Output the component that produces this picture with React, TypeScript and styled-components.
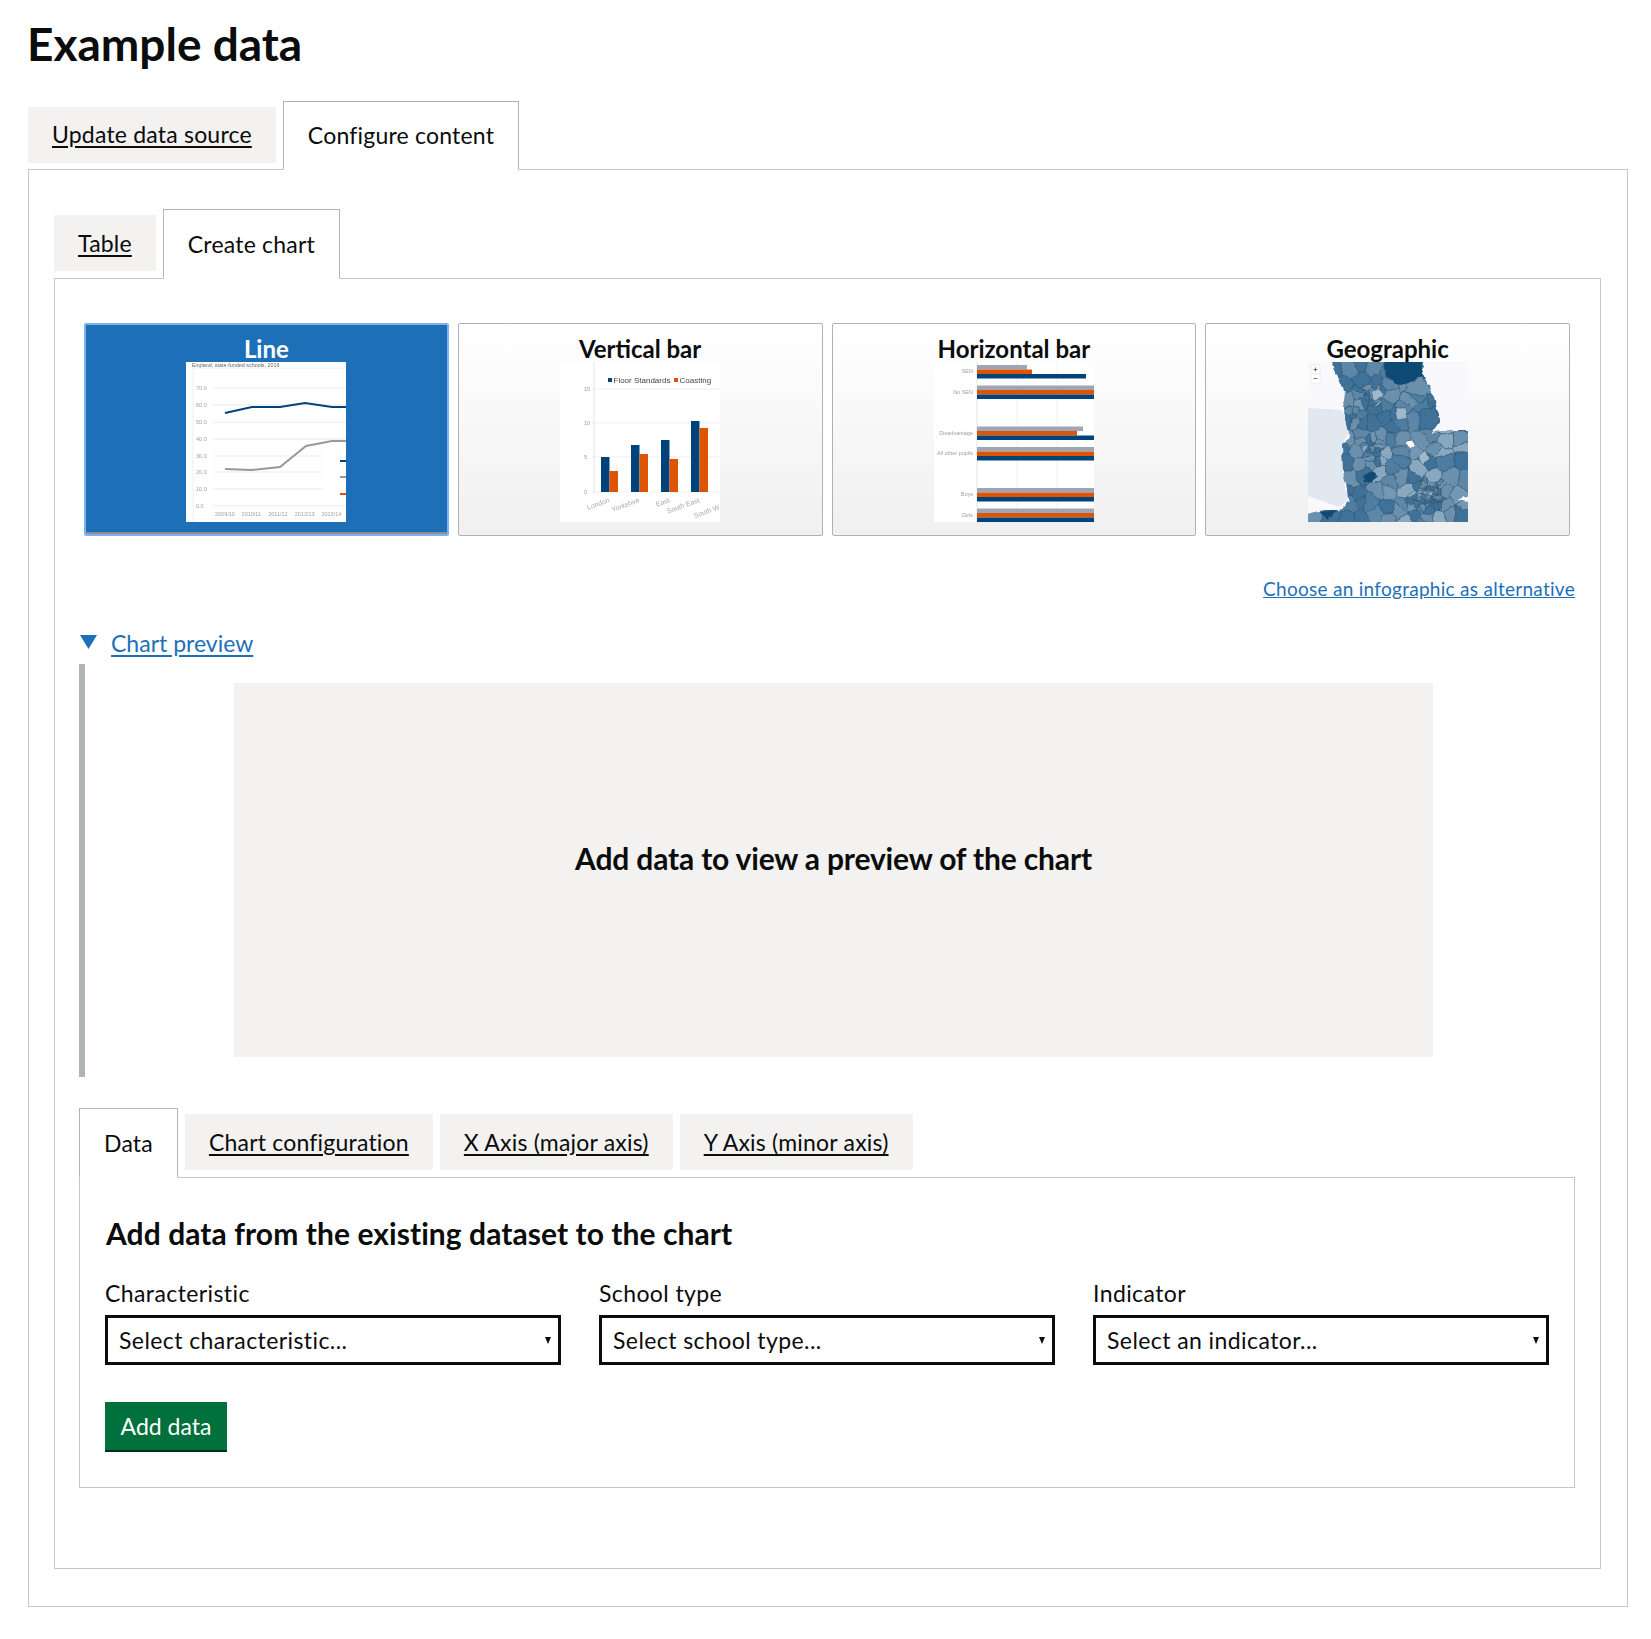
import React from 'react';
import styled, { createGlobalStyle } from 'styled-components';

const FONT = `Lato, "Noto Sans", Arial, sans-serif`;

const GlobalStyle = createGlobalStyle`
    body {
        margin: 0;
        background: #fff;
        color: #0b0c0c;
        font-family: ${FONT};
    }
`;

const Page = styled.div`
    width: 1600px;
    padding: 0 23px 33px 28px;
`;

const Title = styled.h1`
    margin: 0 0 0 -1px;
    padding: 14px 0 15px;
    font-size: 46px;
    line-height: 60px;
    font-weight: 700;
    height: 72px;
`;

const TabList = styled.div`
    display: flex;
    align-items: flex-end;
    gap: 7px;
    position: relative;
    z-index: 1;
    margin-bottom: -1px;
`;

const Tab = styled.a<{ $selected?: boolean }>`
    display: flex;
    align-items: center;
    padding: 0 24px 2px;
    font-size: 23px;
    letter-spacing: 0.2px;
    color: #0b0c0c;
    cursor: pointer;
    text-decoration: ${(p) => (p.$selected ? 'none' : 'underline')};
    text-underline-offset: 3px;
    height: ${(p) => (p.$selected ? '69px' : '56px')};
    margin-bottom: ${(p) => (p.$selected ? '0' : '7px')};
    background: ${(p) => (p.$selected ? '#fff' : '#f3f2f1')};
    border: ${(p) => (p.$selected ? '1px solid #b1b4b6' : 'none')};
    border-bottom: ${(p) => (p.$selected ? '1px solid #fff' : 'none')};
    box-sizing: border-box;
`;

const SubTab = styled(Tab)`
    padding-bottom: 0;
    height: ${(p) => (p.$selected ? '70px' : '56px')};
    margin-bottom: ${(p) => (p.$selected ? '0' : '8px')};
`;

const Panel = styled.div`
    border: 1px solid #c4c6c8;
`;

const OuterPanel = styled(Panel)`
    padding: 39px 26px 37px 25px;
`;

const InnerPanel = styled(Panel)`
    padding: 44px 25px 80px 24px;
`;

const CardRow = styled.div`
    display: grid;
    grid-template-columns: repeat(4, 1fr);
    gap: 9px;
    padding: 0 5px 0 5px;
`;

const Card = styled.div<{ $selected?: boolean }>`
    height: 213px;
    box-sizing: border-box;
    padding-top: ${(p) => (p.$selected ? '10px' : '11px')};
    text-align: center;
    border: ${(p) => (p.$selected ? '2px solid #7fb0f0' : '1px solid #b1b1b1')};
    border-radius: 2px;
    background: ${(p) => (p.$selected ? '#1d70b8' : 'linear-gradient(#fff, #f0f0f0)')};
    color: ${(p) => (p.$selected ? '#fff' : '#0b0c0c')};
    box-shadow: ${(p) => (p.$selected ? 'inset 0 -2px 0 #8f8f8f' : 'none')};
`;

const CardTitle = styled.div`
    font-size: 24px;
    line-height: 27px;
    font-weight: 700;
`;

const Thumb = styled.svg`
    display: block;
    margin: 0 auto;
    width: 160px;
    height: 160px;
    background: #fff;
    filter: blur(0.45px);
`;

const AltLink = styled.a`
    display: block;
    margin-top: 41px;
    text-align: right;
    font-size: 19px;
    letter-spacing: 0.28px;
    line-height: 24px;
    color: #1d70b8;
    text-decoration: underline;
`;

const Summary = styled.div`
    display: flex;
    align-items: center;
    gap: 14px;
    margin-top: 25px;
    height: 38px;
`;

const SummaryText = styled.a`
    margin-bottom: 4px;
    font-size: 23px;
    color: #1d70b8;
    text-decoration: underline;
    text-underline-offset: 3px;
`;

const Caret = styled.svg`
    display: block;
    width: 17px;
    height: 14px;
    margin: -6px 0 0 1px;
`;

const PreviewBody = styled.div`
    border-left: 6px solid #b1b4b6;
    padding: 19px 0 20px;
    margin-bottom: 31px;
`;

const PreviewBox = styled.div`
    width: 1199px;
    height: 374px;
    box-sizing: border-box;
    padding-bottom: 25px;
    margin-left: 149px;
    display: flex;
    align-items: center;
    justify-content: center;
    background: #f3f2f1;
    font-size: 30px;
    letter-spacing: -0.16px;
    font-weight: 700;
`;

const DataPanel = styled(Panel)`
    padding: 35px 25px 35px;
`;

const SectionHeading = styled.h2`
    margin: 0 0 0 1px;
    font-size: 30px;
    letter-spacing: 0.07px;
    line-height: 40px;
    font-weight: 700;
`;

const FieldGrid = styled.div`
    display: grid;
    grid-template-columns: repeat(3, 1fr);
    gap: 38px;
    margin-top: 24px;
`;

const Field = styled.label`
    display: block;
    font-size: 23px;
    letter-spacing: 0.4px;
    line-height: 32px;
`;

const SelectWrap = styled.div`
    position: relative;
    margin-top: 6px;

    &::after {
        content: '';
        position: absolute;
        right: 10px;
        top: 22px;
        border-top: 7px solid #0b0c0c;
        border-left: 3px solid transparent;
        border-right: 3px solid transparent;
        pointer-events: none;
    }
`;

const Select = styled.select`
    display: block;
    width: 100%;
    height: 50px;
    padding: 0 11px;
    box-sizing: border-box;
    appearance: none;
    border: 3px solid #0b0c0c;
    border-radius: 0;
    background: #fff;
    color: #0b0c0c;
    font-family: ${FONT};
    font-size: 23px;
    letter-spacing: 0.42px;
`;

const AddButton = styled.button`
    display: block;
    width: 122px;
    height: 50px;
    margin-top: 37px;
    padding: 0;
    border: none;
    border-bottom: 2px solid #002d18;
    background: #00703c;
    color: #fff;
    font-family: ${FONT};
    font-size: 23px;
`;

const BLUE = '#00437a';
const ORANGE = '#de5405';
const GREY = '#a0a5b5';
const AXIS = { fontSize: 5.5, fill: '#a0a0a0', fontFamily: '"Liberation Sans", sans-serif' };

const LineThumb = () => (
    <Thumb viewBox="0 0 160 160">
        <text x="6" y="4.5" fontSize="5.4" fill="#666" fontFamily='"Liberation Sans", sans-serif'>England, state-funded schools, 2016</text>
        <path d="M7 160V6H160" fill="none" stroke="#eee" />
        {[26, 43, 60, 77, 94, 110, 127, 144].map((y, i) => (
            <React.Fragment key={y}>
                <line x1="27" x2={y > 90 && y < 140 ? 137 : 160} y1={y} y2={y} stroke="#e6e6e6" strokeWidth="0.8" />
                <text x="10" y={y + 2} {...AXIS}>{(70 - i * 10).toFixed(1)}</text>
            </React.Fragment>
        ))}
        {['2009/10', '2010/11', '2011/12', '2012/13', '2013/14'].map((t, i) => (
            <text key={t} x={29 + i * 26.6} y="154" {...AXIS}>{t}</text>
        ))}
        <polyline points="39,51 66,45 94,45 119,41 146,45 160,45" fill="none" stroke={BLUE} strokeWidth="2" />
        <polyline points="39,107 66,108 94,105 120,84 146,79 160,79" fill="none" stroke="#999" strokeWidth="2" />
        <line x1="154" x2="160" y1="99" y2="99" stroke={BLUE} strokeWidth="2" />
        <line x1="154" x2="160" y1="115" y2="115" stroke="#999" strokeWidth="2" />
        <line x1="154" x2="160" y1="132" y2="132" stroke={ORANGE} strokeWidth="2" />
    </Thumb>
);

const VERTICAL_BARS = [
    { x: 41, blue: 95, orange: 109, label: 'London' },
    { x: 71, blue: 83, orange: 92, label: 'Yorkshire' },
    { x: 101, blue: 78, orange: 97, label: 'East' },
    { x: 131, blue: 59, orange: 66, label: 'South East' },
];

const VerticalThumb = () => (
    <Thumb viewBox="0 0 160 160">
        {[[27, 15], [61, 10], [95, 5], [130, 0]].map(([y, v]) => (
            <React.Fragment key={y}>
                <line x1="32" x2="160" y1={y} y2={y} stroke="#e6e6e6" strokeWidth="0.7" />
                <text x="24" y={y + 1.5} {...AXIS}>{v}</text>
            </React.Fragment>
        ))}
        <line x1="34" x2="34" y1="0" y2="130" stroke="#ddd" strokeWidth="0.8" />
        <rect x="48" y="16" width="4" height="4" fill={BLUE} />
        <text x="53.5" y="21" fontSize="8" fill="#444" fontFamily='"Liberation Sans", sans-serif'>Floor Standards</text>
        <rect x="114" y="16" width="4" height="4" fill={ORANGE} />
        <text x="119.5" y="21" fontSize="8" fill="#444" fontFamily='"Liberation Sans", sans-serif'>Coasting</text>
        {VERTICAL_BARS.map((b) => (
            <React.Fragment key={b.label}>
                <rect x={b.x} y={b.blue} width="8.5" height={130 - b.blue} fill={BLUE} />
                <rect x={b.x + 8.5} y={b.orange} width="8.5" height={130 - b.orange} fill={ORANGE} />
                <text
                    x={b.x + 9}
                    y="140"
                    textAnchor="end"
                    transform={`rotate(-20 ${b.x + 9} 140)`}
                    {...AXIS}
                    fontSize="7"
                    fill="#aaa"
                >
                    {b.label}
                </text>
            </React.Fragment>
        ))}
        <text x="160" y="147" textAnchor="end" transform="rotate(-20 160 147)" {...AXIS} fontSize="7" fill="#aaa">South W</text>
    </Thumb>
);

const HORIZONTAL_GROUPS = [
    { y: 3, label: 'SEN', grey: 93, orange: 98, blue: 152 },
    { y: 23.5, label: 'No SEN', grey: 160, orange: 160, blue: 160 },
    { y: 64.5, label: 'Disadvantage', grey: 149, orange: 143, blue: 160 },
    { y: 85, label: 'All other pupils', grey: 160, orange: 160, blue: 160 },
    { y: 126, label: 'Boys', grey: 160, orange: 160, blue: 160 },
    { y: 146.5, label: 'Girls', grey: 160, orange: 160, blue: 160 },
];

const HorizontalThumb = () => (
    <Thumb viewBox="0 0 160 160">
        <line x1="83" x2="83" y1="0" y2="160" stroke="#eee" strokeWidth="0.8" />
        <line x1="123" x2="123" y1="0" y2="160" stroke="#eee" strokeWidth="0.8" />
        <line x1="43" x2="43" y1="0" y2="160" stroke="#ddd" strokeWidth="0.8" />
        {HORIZONTAL_GROUPS.map((g) => (
            <React.Fragment key={g.label}>
                <text x="39" y={g.y + 8} textAnchor="end" {...AXIS}>{g.label}</text>
                <rect x="43" y={g.y} width={g.grey - 43} height="4.5" fill={GREY} />
                <rect x="43" y={g.y + 4.5} width={g.orange - 43} height="4.5" fill={ORANGE} />
                <rect x="43" y={g.y + 9} width={g.blue - 43} height="4.5" fill={BLUE} />
            </React.Fragment>
        ))}
    </Thumb>
);

// seeded so the map comes out the same on every load
const seeded = (start: number) => {
    let s = start;
    return () => {
        s = (s * 16807) % 2147483647;
        return (s - 1) / 2147483646;
    };
};

type Pt = [number, number];

const clipCell = (poly: Pt[], a: Pt, b: Pt): Pt[] => {
    const mx = (a[0] + b[0]) / 2;
    const my = (a[1] + b[1]) / 2;
    const nx = b[0] - a[0];
    const ny = b[1] - a[1];
    const side = (p: Pt) => (p[0] - mx) * nx + (p[1] - my) * ny;
    const out: Pt[] = [];
    poly.forEach((p, i) => {
        const q = poly[(i + 1) % poly.length];
        const sp = side(p);
        const sq = side(q);
        if (sp <= 0) out.push(p);
        if (sp * sq < 0) {
            const t = sp / (sp - sq);
            out.push([p[0] + (q[0] - p[0]) * t, p[1] + (q[1] - p[1]) * t]);
        }
    });
    return out;
};

const buildMapCells = () => {
    const rnd = seeded(4711);
    const seeds: Pt[] = [];
    for (let y = 0; y < 12; y++) {
        for (let x = 0; x < 11; x++) {
            seeds.push([x * 14.5 + 3 + rnd() * 12, y * 13.5 + 2 + rnd() * 11]);
        }
    }
    // denser districts: London, Manchester area, Birmingham
    const clusters: [number, number, number, number][] = [
        [120, 135, 12, 44],
        [64, 88, 9, 16],
        [62, 42, 16, 18],
        [110, 150, 20, 14],
    ];
    clusters.forEach(([cx, cy, r, n]) => {
        for (let i = 0; i < n; i++) {
            seeds.push([cx + (rnd() - 0.5) * r * 2, cy + (rnd() - 0.5) * r * 2]);
        }
    });
    const shades = ['#3f7299', '#3f7299', '#3f7299', '#4d7ea2', '#5b87a8', '#6a90ae', '#6a90ae', '#7398b5', '#88a8c0'];
    const box: Pt[] = [[-6, -6], [166, -6], [166, 166], [-6, 166]];
    return seeds.map((s) => {
        const cell = seeds.reduce<Pt[]>((poly, o) => (o === s ? poly : clipCell(poly, s, o)), box);
        return {
            points: cell.map((p) => `${p[0].toFixed(1)},${p[1].toFixed(1)}`).join(' '),
            fill: shades[Math.floor(rnd() * shades.length)],
        };
    });
};

const MAP_CELLS = buildMapCells();

const LAND = '20,-6 115,-6 114,11 125,31 132,58 125,71 137,68 166,68 166,131 149,138 166,141 166,166 -6,166 -6,153 15,148 32,148 42,138 35,111 34,81 42,75 35,45 37,31 27,8';
const WALES = '0,46 34,48 44,68 36,78 37,128 44,135 31,145 0,134';

const MapThumb = () => (
    <Thumb viewBox="0 0 160 160">
        <defs>
            <filter id="wobble" x="-5%" y="-5%" width="110%" height="110%">
                <feTurbulence type="fractalNoise" baseFrequency="0.14" numOctaves="2" seed="3" />
                <feDisplacementMap in="SourceGraphic" scale="5" xChannelSelector="R" yChannelSelector="G" />
            </filter>
            <clipPath id="land">
                <polygon points={LAND} />
            </clipPath>
        </defs>
        <rect width="160" height="160" fill="#f8f8fd" />
        <polygon points={WALES} fill="#e2e8f0" />
        <g filter="url(#wobble)">
            <g clipPath="url(#land)" stroke="#24475f" strokeWidth="0.5">
                {MAP_CELLS.map((c) => (
                    <polygon key={c.points} points={c.points} fill={c.fill} />
                ))}
                <polygon points="76,-6 117,-6 116,11 118,18 100,24 88,22 78,14" fill="#0f4c75" />
                <polygon points="98,22 114,14 125,30 110,34 98,30" fill="#6a90ae" />
                <polygon points="110,50 126,44 132,58 125,68 111,66" fill="#3f7299" />
                <polygon points="56,113 66,110 70,114 62,120 56,120" fill="#0f4c75" />
                <polygon points="12,150 28,148 24,155 18,157" fill="#0f4c75" />
                <polygon points="31,46 36,47 35,52 31,51" fill="#0f4c75" />
                <polygon points="98,80 103,78 107,84 102,88" fill="#fff" />
                <polygon points="111,92 118,88 122,96 116,103 110,98" fill="#9dbacd" />
                <polygon points="88,46 98,46 100,56 90,58" fill="#9dbacd" />
                <polygon points="62,30 70,26 76,34 66,38" fill="#9dbacd" />
            </g>
        </g>
        <rect x="3" y="3" width="9" height="9" fill="#fff" stroke="#ddd" strokeWidth="0.4" />
        <rect x="3" y="12" width="9" height="9" fill="#fff" stroke="#ddd" strokeWidth="0.4" />
        <path d="M5.5 7.5h4M7.5 5.5v4M5.5 16.5h4" stroke="#555" strokeWidth="0.8" />
    </Thumb>
);

const App = (): JSX.Element => {
    return (
        <Page>
            <GlobalStyle />
            <Title>Example data</Title>
            <TabList>
                <Tab>Update data source</Tab>
                <Tab $selected>Configure content</Tab>
            </TabList>
            <OuterPanel>
                <TabList>
                    <SubTab>Table</SubTab>
                    <SubTab $selected>Create chart</SubTab>
                </TabList>
                <InnerPanel>
                    <CardRow>
                        <Card $selected>
                            <CardTitle>Line</CardTitle>
                            <LineThumb />
                        </Card>
                        <Card>
                            <CardTitle>Vertical bar</CardTitle>
                            <VerticalThumb />
                        </Card>
                        <Card>
                            <CardTitle>Horizontal bar</CardTitle>
                            <HorizontalThumb />
                        </Card>
                        <Card>
                            <CardTitle>Geographic</CardTitle>
                            <MapThumb />
                        </Card>
                    </CardRow>
                    <AltLink>Choose an infographic as alternative</AltLink>
                    <Summary>
                        <Caret viewBox="0 0 17 14">
                            <path d="M0 0H17L8.5 14Z" fill="#1d70b8" />
                        </Caret>
                        <SummaryText>Chart preview</SummaryText>
                    </Summary>
                    <PreviewBody>
                        <PreviewBox>Add data to view a preview of the chart</PreviewBox>
                    </PreviewBody>
                    <TabList>
                        <SubTab $selected>Data</SubTab>
                        <SubTab>Chart configuration</SubTab>
                        <SubTab>X Axis (major axis)</SubTab>
                        <SubTab>Y Axis (minor axis)</SubTab>
                    </TabList>
                    <DataPanel>
                        <SectionHeading>Add data from the existing dataset to the chart</SectionHeading>
                        <FieldGrid>
                            <Field>
                                Characteristic
                                <SelectWrap>
                                    <Select defaultValue="">
                                        <option value="">Select characteristic...</option>
                                    </Select>
                                </SelectWrap>
                            </Field>
                            <Field>
                                School type
                                <SelectWrap>
                                    <Select defaultValue="">
                                        <option value="">Select school type...</option>
                                    </Select>
                                </SelectWrap>
                            </Field>
                            <Field>
                                Indicator
                                <SelectWrap>
                                    <Select defaultValue="">
                                        <option value="">Select an indicator...</option>
                                    </Select>
                                </SelectWrap>
                            </Field>
                        </FieldGrid>
                        <AddButton>Add data</AddButton>
                    </DataPanel>
                </InnerPanel>
            </OuterPanel>
        </Page>
    );
};

export default App;
